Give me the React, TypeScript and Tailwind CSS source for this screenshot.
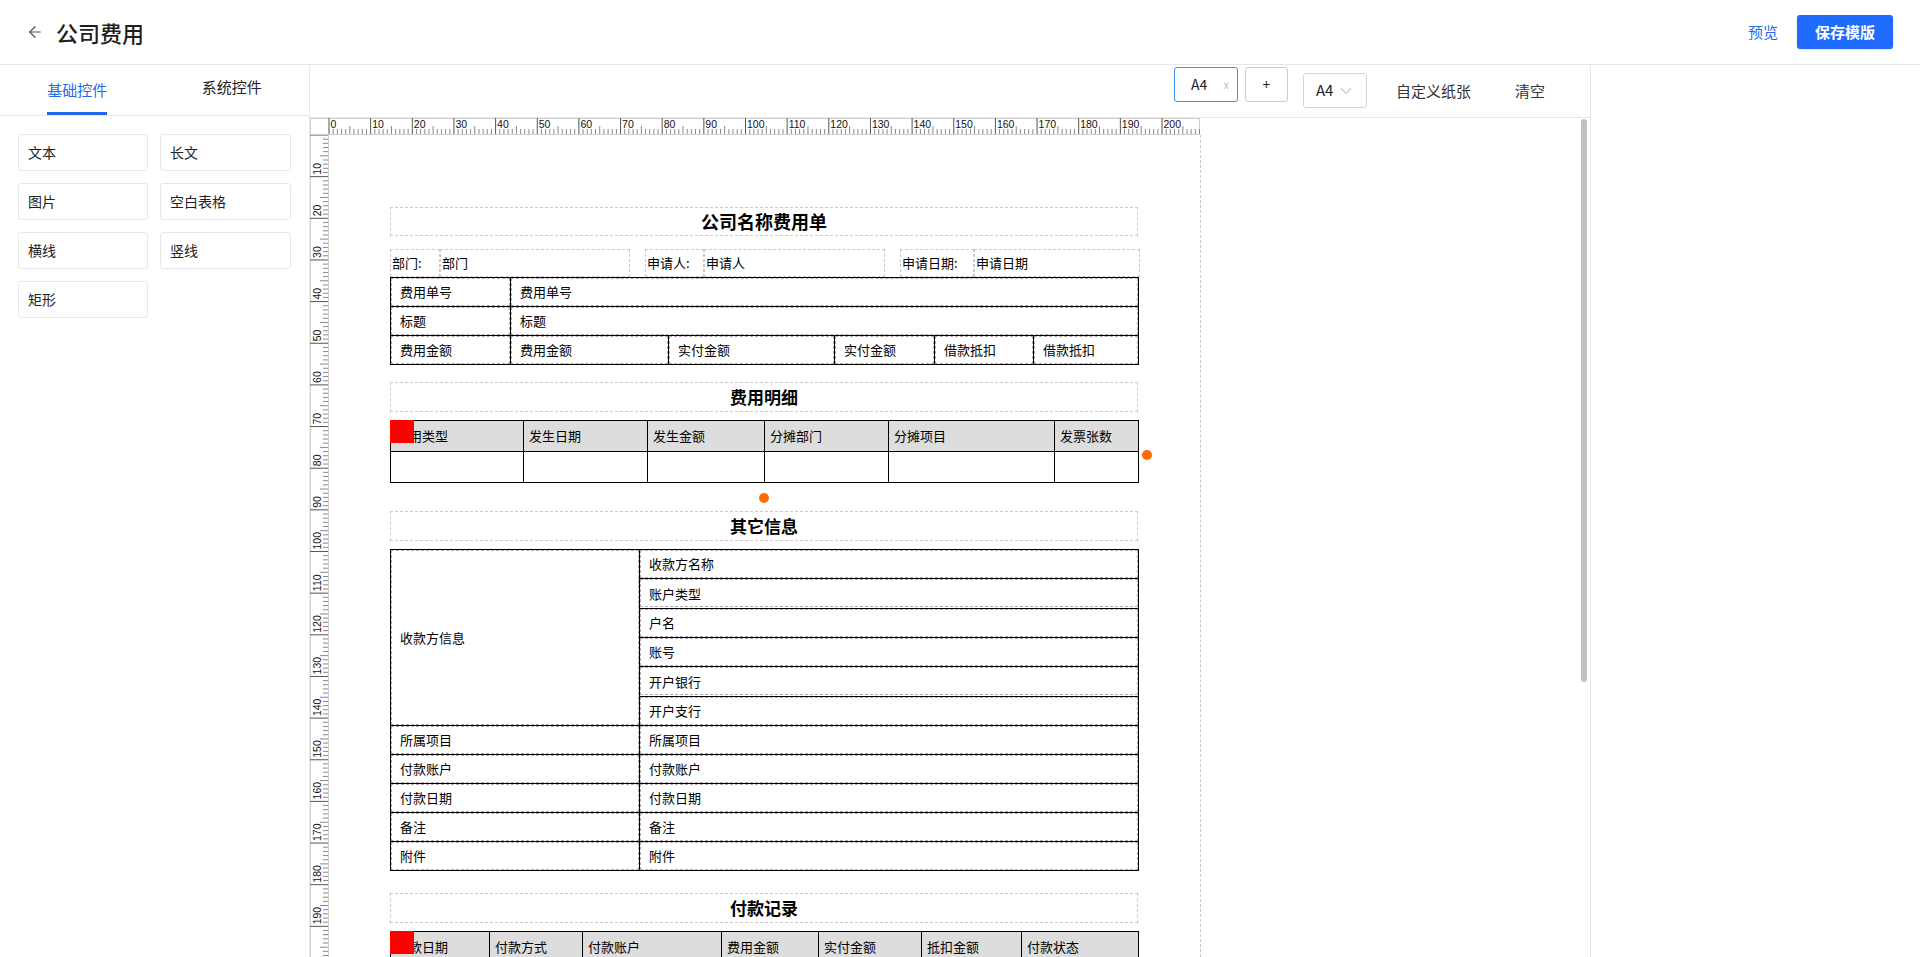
import { ArrowLeft } from "lucide-react";

const MM = 4.165;
const font = { fontFamily: '"Noto Sans CJK SC", "Noto Sans", sans-serif' };

const basicItems = ["文本", "长文", "图片", "空白表格", "横线", "竖线", "矩形"];

function TopRuler() {
  const ticks = [];
  for (let i = 0; i <= 210; i++) {
    const x = 19 + i * MM;
    const h = i % 10 === 0 ? 16 : i % 5 === 0 ? 8 : 5;
    ticks.push(<line key={i} x1={x} x2={x} y1={16 - h} y2={16} stroke={i % 10 === 0 ? "#555" : "#888"} strokeWidth={1} />);
    if (i % 10 === 0 && i <= 200) {
      ticks.push(
        <text key={"t" + i} x={x + 1.5} y={9.5} fontSize={10.5} fill="#111" fontFamily="Liberation Sans, sans-serif">
          {i}
        </text>
      );
    }
  }
  return (
    <svg width={890} height={17} className="block">
      <rect x={0.5} y={0.5} width={889} height={16} fill="#fff" stroke="#cfcfcf" />
      {ticks}
    </svg>
  );
}

function LeftRuler() {
  const ticks = [];
  for (let i = 0; i <= 200; i++) {
    const y = i * MM;
    const w = i % 10 === 0 ? 18 : i % 5 === 0 ? 8 : 5;
    ticks.push(<line key={i} x1={18 - w} x2={18} y1={y} y2={y} stroke={i % 10 === 0 ? "#555" : "#888"} strokeWidth={1} />);
    if (i % 10 === 0 && i > 0 && i < 200) {
      ticks.push(
        <text
          key={"t" + i}
          x={0}
          y={0}
          fontSize={10.5}
          fill="#111"
          fontFamily="Liberation Sans, sans-serif"
          transform={`translate(10.5 ${y - 2}) rotate(-90)`}
        >
          {i}
        </text>
      );
    }
  }
  return (
    <svg width={19} height={822} className="block">
      <rect x={0.5} y={-1} width={18} height={830} fill="#fff" stroke="#cfcfcf" />
      {ticks}
    </svg>
  );
}

function SectionTitle({ text, className = "" }: { text: string; className?: string }) {
  return (
    <div
      className={`flex h-[30px] items-center justify-center border border-dashed border-[#d3c3cb] text-[17px] font-bold text-black ${className}`}
    >
      {text}
    </div>
  );
}

function DCell({ children, colSpan, h = 29 }: { children?: React.ReactNode; colSpan?: number; h?: number }) {
  return (
    <td colSpan={colSpan} className="border border-black p-0 align-top">
      <div className="flex items-center border border-dashed border-[#b4a9af] px-2" style={{ height: h - 1 }}>
        {children}
      </div>
    </td>
  );
}

function Field({ label, value, lw, vw }: { label: string; value: string; lw: number; vw: number }) {
  return (
    <div className="flex">
      <div className="flex h-[28px] items-center border border-dashed border-[#d3c3cb] pl-[1px]" style={{ width: lw }}>
        {label}
      </div>
      <div className="flex h-[28px] items-center border border-dashed border-[#d3c3cb] pl-[1px]" style={{ width: vw }}>
        {value}
      </div>
    </div>
  );
}

export default function App() {
  const detailHead = ["费用类型", "发生日期", "发生金额", "分摊部门", "分摊项目", "发票张数"];
  const detailCols = [133, 124, 117, 124, 166, 84];
  const payHead = ["付款日期", "付款方式", "付款账户", "费用金额", "实付金额", "抵扣金额", "付款状态"];
  const payCols = [99, 93, 139, 97, 103, 100, 117];
  const payee = ["收款方名称", "账户类型", "户名", "账号", "开户银行", "开户支行"];
  const others = ["所属项目", "付款账户", "付款日期", "备注", "附件"];

  return (
    <div className="h-[957px] w-[1920px] overflow-hidden bg-white text-[#333]" style={font}>
      <header className="flex h-[65px] items-center justify-between border-b border-[#e5e7eb] pl-[26px] pr-[27px]">
        <div className="flex items-center gap-[12px]">
          <ArrowLeft size={18} strokeWidth={1.6} className="text-[#555]" />
          <h1 className="text-[22px] font-medium text-[#1f1f1f]">公司费用</h1>
        </div>
        <div className="flex items-center gap-[19px]">
          <span className="text-[15px] text-[#2468f2]">预览</span>
          <button className="h-[34px] w-[96px] rounded-[3px] bg-[#1f6bff] text-[15px] font-semibold text-white shadow-sm">
            保存模版
          </button>
        </div>
      </header>

      <div className="flex h-[892px]">
        <aside className="w-[310px] shrink-0 border-r border-[#e5e7eb]">
          <div className="flex h-[51px] border-b border-[#e5e7eb] text-[15px]">
            <div className="flex flex-1 justify-center">
              <div className="flex flex-col justify-between pt-[14px]">
                <span className="text-[#2468f2]">基础控件</span>
                <div className="h-[3px] bg-[#2468f2]" />
              </div>
            </div>
            <div className="flex flex-1 items-center justify-center pb-[5px] text-[#222]">系统控件</div>
          </div>
          <div className="grid grid-cols-[130px_131px] gap-x-[12px] gap-y-[12px] pl-[18px] pt-[18px]">
            {basicItems.map((item) => (
              <div key={item} className="flex h-[37px] items-center rounded-[3px] border border-[#e5e7eb] pl-[9px] text-[14px] text-[#222]">
                {item}
              </div>
            ))}
          </div>
        </aside>

        <main className="flex w-[1281px] shrink-0 flex-col border-r border-[#e5e7eb]">
          <div className="flex h-[53px] shrink-0 items-start border-b border-[#e5e7eb] pl-[864px] pt-[2px] text-[14px]">
            <div className="flex h-[35px] w-[64px] items-center justify-between rounded-[3px] border border-[#3d8ef7] pl-[16px] pr-[8px]">
              <span className="text-[#222]">A4</span>
              <span className="text-[11px] text-[#bbb]">x</span>
            </div>
            <div className="ml-[7px] flex h-[35px] w-[43px] items-center justify-center rounded-[3px] border border-[#ccc] text-[#222]">
              +
            </div>
            <div className="ml-[15px] mt-[6px] flex h-[35px] w-[64px] items-center rounded-[3px] border border-[#d5d5d5] pl-[12px] text-[15px] text-[#222]">
              A4
              <svg width="12" height="8" viewBox="0 0 12 8" className="ml-[7px]">
                <path d="M1 1.5 L6 6.5 L11 1.5" fill="none" stroke="#c8c8c8" strokeWidth="1.2" />
              </svg>
            </div>
            <span className="ml-[29px] mt-[13px] text-[15px] text-[#333]">自定义纸张</span>
            <span className="ml-[44px] mt-[13px] text-[15px] text-[#333]">清空</span>
          </div>

          <div className="flex flex-1 overflow-hidden">
            <div className="flex-1 overflow-hidden">
              <TopRuler />
              <div className="flex">
                <LeftRuler />
                <div className="h-[822px] w-[872px] border-r border-dashed border-[#c8c8c8] pl-[61px] pt-[72px] text-[13px] text-black">
                  <div className="w-[748px]">
                    <div className="flex h-[29px] items-center justify-center border border-dashed border-[#d3c3cb] text-[18px] font-bold">
                      公司名称费用单
                    </div>

                    <div className="mt-[13px] flex gap-[15px]">
                      <Field label="部门:" value="部门" lw={50} vw={190} />
                      <Field label="申请人:" value="申请人" lw={59} vw={181} />
                      <Field label="申请日期:" value="申请日期" lw={74} vw={166} />
                    </div>

                    <table className="w-[748px] table-fixed border-collapse">
                      <colgroup>
                        {[120, 158, 166, 100, 99, 105].map((w, i) => (
                          <col key={i} style={{ width: w }} />
                        ))}
                      </colgroup>
                      <tbody>
                        <tr>
                          <DCell>费用单号</DCell>
                          <DCell colSpan={5}>费用单号</DCell>
                        </tr>
                        <tr>
                          <DCell>标题</DCell>
                          <DCell colSpan={5}>标题</DCell>
                        </tr>
                        <tr>
                          <DCell>费用金额</DCell>
                          <DCell>费用金额</DCell>
                          <DCell>实付金额</DCell>
                          <DCell>实付金额</DCell>
                          <DCell>借款抵扣</DCell>
                          <DCell>借款抵扣</DCell>
                        </tr>
                      </tbody>
                    </table>

                    <SectionTitle text="费用明细" className="mt-[17px]" />
                    <div className="relative mt-[8px]">
                      <table className="w-[748px] table-fixed border-collapse">
                        <colgroup>
                          {detailCols.map((w, i) => (
                            <col key={i} style={{ width: w }} />
                          ))}
                        </colgroup>
                        <tbody>
                          <tr className="h-[31px] bg-[#dddddd]">
                            {detailHead.map((h) => (
                              <td key={h} className="border border-black px-[5px]">
                                {h}
                              </td>
                            ))}
                          </tr>
                          <tr className="h-[31px]">
                            {detailHead.map((h) => (
                              <td key={h} className="border border-black" />
                            ))}
                          </tr>
                        </tbody>
                      </table>
                      <div className="absolute left-0 top-0 h-[23px] w-[24px] bg-[#ff0000]" />
                      <div className="absolute left-[752px] top-[30px] h-[10px] w-[10px] rounded-full bg-[#ff6a00]" />
                      <div className="absolute left-[369px] top-[73px] h-[10px] w-[10px] rounded-full bg-[#ff6a00]" />
                    </div>

                    <SectionTitle text="其它信息" className="mt-[28px]" />
                    <table className="mt-[8px] w-[748px] table-fixed border-collapse">
                      <colgroup>
                        <col style={{ width: 249 }} />
                        <col style={{ width: 499 }} />
                      </colgroup>
                      <tbody>
                        {payee.map((p, i) => (
                          <tr key={p}>
                            {i === 0 && (
                              <td rowSpan={6} className="border border-black p-0">
                                <div className="flex h-[175px] items-center border border-dashed border-[#b4a9af] px-2">收款方信息</div>
                              </td>
                            )}
                            <DCell>{p}</DCell>
                          </tr>
                        ))}
                        {others.map((o) => (
                          <tr key={o}>
                            <DCell>{o}</DCell>
                            <DCell>{o}</DCell>
                          </tr>
                        ))}
                      </tbody>
                    </table>

                    <SectionTitle text="付款记录" className="mt-[22px]" />
                    <div className="relative mt-[8px]">
                      <table className="w-[748px] table-fixed border-collapse">
                        <colgroup>
                          {payCols.map((w, i) => (
                            <col key={i} style={{ width: w }} />
                          ))}
                        </colgroup>
                        <tbody>
                          <tr className="h-[31px] bg-[#dddddd]">
                            {payHead.map((h) => (
                              <td key={h} className="border border-black px-[5px]">
                                {h}
                              </td>
                            ))}
                          </tr>
                          <tr className="h-[31px]">
                            {payHead.map((h) => (
                              <td key={h} className="border border-black" />
                            ))}
                          </tr>
                        </tbody>
                      </table>
                      <div className="absolute left-0 top-0 h-[23px] w-[24px] bg-[#ff0000]" />
                    </div>
                  </div>
                </div>
              </div>
            </div>
            <div className="w-[9px] shrink-0 pt-[1px]">
              <div className="h-[563px] w-[6px] rounded-full bg-[#c1c1c1]" />
            </div>
          </div>
        </main>
      </div>
    </div>
  );
}
